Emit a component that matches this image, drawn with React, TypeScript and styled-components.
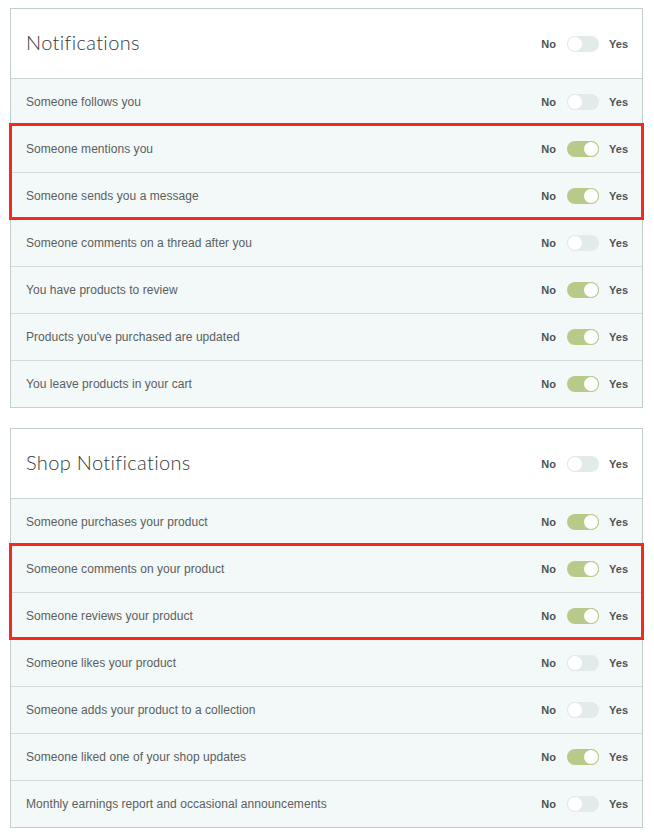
import React from "react";
import styled, { createGlobalStyle } from "styled-components";

const Global = createGlobalStyle`
  html, body { margin: 0; padding: 0; background: #ffffff; }
  body { font-family: "Liberation Sans", Arial, sans-serif; }
`;

const Page = styled.div`
  display: flex;
  flex-direction: column;
  gap: 20px;
  padding: 8px 11px 7px 10px;
`;

const Card = styled.section`
  border: 1px solid #c3cfcf;
  background: #f3f8f8;
  display: flex;
  flex-direction: column;
`;

const Header = styled.div`
  height: 69px;
  background: #ffffff;
  display: flex;
  align-items: center;
  justify-content: space-between;
  padding: 0 14px 0 15px;
  border-bottom: 1px solid #c9d4d4;
`;

const Title = styled.h2`
  margin: -3px 0 0 0;
  font-family: Lato, "Open Sans", sans-serif;
  font-weight: 300;
  font-size: 20px;
  line-height: 24px;
  color: #333a3a;
  letter-spacing: 0.35px;
`;

const Row = styled.div<{ $first?: boolean }>`
  height: 46px;
  display: flex;
  align-items: center;
  justify-content: space-between;
  padding: 0 14px 0 15px;
  border-top: ${(p) => (p.$first ? "none" : "1px solid #d3dcdc")};
`;

const Label = styled.span`
  font-size: 12px;
  letter-spacing: 0.05px;
  color: #5a6060;
`;

const Group = styled.div`
  position: relative;
  display: flex;
  flex-direction: column;
  &::after {
    content: "";
    position: absolute;
    top: -2px;
    left: -2px;
    right: -2px;
    bottom: -1px;
    border: 3px solid #f42a1e;
    pointer-events: none;
  }
`;

const Switcher = styled.div`
  display: flex;
  align-items: center;
`;

const Word = styled.span`
  font-size: 11px;
  font-weight: 700;
  color: #4e5454;
`;

const Track = styled.span<{ $on: boolean }>`
  position: relative;
  display: inline-block;
  width: 32px;
  height: 16px;
  border-radius: 8px;
  margin: 0 10px 0 11px;
  background: ${(p) => (p.$on ? "#b7ca89" : "#e3eaea")};
`;

const Knob = styled.span<{ $on: boolean }>`
  position: absolute;
  top: 0;
  left: ${(p) => (p.$on ? "16px" : "0")};
  width: 16px;
  height: 16px;
  box-sizing: border-box;
  border-radius: 50%;
  background: #ffffff;
  border: 1px solid ${(p) => (p.$on ? "#b7ca89" : "#e3eaea")};
`;

const Toggle = ({ on }: { on: boolean }) => (
  <Switcher>
    <Word>No</Word>
    <Track $on={on}>
      <Knob $on={on} />
    </Track>
    <Word>Yes</Word>
  </Switcher>
);

type Item = { text: string; on: boolean };

const notif: Item[] = [
  { text: "Someone follows you", on: false },
  { text: "Someone mentions you", on: true },
  { text: "Someone sends you a message", on: true },
  { text: "Someone comments on a thread after you", on: false },
  { text: "You have products to review", on: true },
  { text: "Products you've purchased are updated", on: true },
  { text: "You leave products in your cart", on: true },
];

const shop: Item[] = [
  { text: "Someone purchases your product", on: true },
  { text: "Someone comments on your product", on: true },
  { text: "Someone reviews your product", on: true },
  { text: "Someone likes your product", on: false },
  { text: "Someone adds your product to a collection", on: false },
  { text: "Someone liked one of your shop updates", on: true },
  { text: "Monthly earnings report and occasional announcements", on: false },
];

const renderRow = (it: Item, first: boolean) => (
  <Row key={it.text} $first={first}>
    <Label>{it.text}</Label>
    <Toggle on={it.on} />
  </Row>
);

const Section = ({ title, items }: { title: string; items: Item[] }) => (
  <Card>
    <Header>
      <Title>{title}</Title>
      <Toggle on={false} />
    </Header>
    {renderRow(items[0], true)}
    <Group>
      {renderRow(items[1], false)}
      {renderRow(items[2], false)}
    </Group>
    {items.slice(3).map((it) => renderRow(it, false))}
  </Card>
);

export default function App() {
  return (
    <>
      <Global />
      <Page>
        <Section title="Notifications" items={notif} />
        <Section title="Shop Notifications" items={shop} />
      </Page>
    </>
  );
}
